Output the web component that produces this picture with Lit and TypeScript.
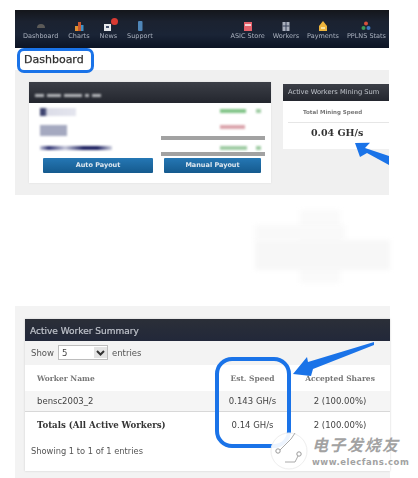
import { LitElement, html, css, svg } from "lit";
import { customElement } from "lit/decorators.js";

const navLeft = [
  { label: "Dashboard", icon: svg`<path d="M1 7a4 4 0 0 1 8 0z" fill="#5b5a58"/>` },
  { label: "Charts", icon: svg`<rect x="1" y="5" width="3" height="5" fill="#e0912f"/><rect x="4" y="1" width="3" height="9" fill="#c9572f"/><rect x="7" y="4" width="2.5" height="6" fill="#3f8fc4"/>` },
  { label: "News", icon: svg`<rect x="1" y="3" width="7" height="7" fill="#e6e8ec"/><rect x="3" y="5" width="3" height="2" fill="#44506a"/>` },
  { label: "Support", icon: svg`<rect x="3" y="0" width="4.5" height="10" rx="1" fill="#4f86b8"/>` },
];
const navRight = [
  { label: "ASIC Store", icon: svg`<rect x="1" y="1" width="8" height="9" fill="#e3606a"/><rect x="2" y="3" width="6" height="2" fill="#f3d4d6"/>` },
  { label: "Workers", icon: svg`<rect x="1.5" y="1" width="7" height="9" fill="#a9afbd"/><path d="M5 1v9M1.5 5h7" stroke="#39425a"/>` },
  { label: "Payments", icon: svg`<path d="M5 0l4 5v5H1V5z" fill="#eeb53c"/><rect x="3" y="6" width="4" height="2" fill="#f7e2a0"/>` },
  { label: "PPLNS Stats", icon: svg`<circle cx="5" cy="2.5" r="2" fill="#d7503c"/><circle cx="2.5" cy="7" r="2" fill="#3c9a58"/><circle cx="7.5" cy="7" r="2" fill="#3c78c0"/>` },
];

const summaryRows = [
  { name: "Worker Name", speed: "Est. Speed", shares: "Accepted Shares", kind: "head" },
  { name: "bensc2003_2", speed: "0.143 GH/s", shares: "2 (100.00%)", kind: "body" },
  { name: "Totals (All Active Workers)", speed: "0.14 GH/s", shares: "2 (100.00%)", kind: "total" },
];

@customElement("app-root")
export class AppRoot extends LitElement {
  static styles = css`
    :host { display: block; width: 418px; height: 478px; background: #fff; overflow: hidden; }
    * { box-sizing: border-box; }
    .page { position: relative; width: 418px; height: 478px; padding: 10px 0 0 15px; font-family: "DejaVu Sans", sans-serif; display: flex; flex-direction: column; }
    .shot1 { width: 374px; height: 185px; display: flex; flex-direction: column; filter: blur(0.5px); }
    nav { height: 38px; flex: none; background: linear-gradient(#14161b 0%, #1b2230 30%, #1a2436 65%, #0c1424 100%); display: flex; justify-content: space-between; padding: 0 0 0 8px; }
    .group { display: flex; gap: 10px; position: relative; }
    .item { display: flex; flex-direction: column; align-items: center; padding-top: 11px; gap: 1px; font-size: 6.5px; line-height: 8px; color: #a9b0bd; white-space: nowrap; }
    .item svg { width: 10px; height: 10px; display: block; }
    .badge { position: absolute; left: 88px; top: 8px; width: 7px; height: 7px; border-radius: 50%; background: #d93a32; }
    .group.right { gap: 8px; padding-right: 3px; }
    .titlebar { height: 22px; flex: none; background: #fff; padding: 3px 0 0 9px; font-size: 11px; line-height: 17px; color: #2e2e2e; -webkit-text-stroke: 0.25px #2e2e2e; }
    .content { flex: 1; background: #f0f0f0; display: flex; align-items: flex-start; padding: 12px 0 0 14px; gap: 12px; }
    .panel-l { width: 242px; height: 101px; background: #fff; flex: none; display: flex; flex-direction: column; box-shadow: 0 0 2px #ddd; }
    .dark { background: linear-gradient(#3c3f47, #23262e); flex: none; }
    .panel-l .dark { height: 21px; display: flex; align-items: flex-end; gap: 3px; padding: 0 0 6px 6px; }
    .smear-l { height: 3px; background: #b4b6ba; filter: blur(.8px); }
    .sm1 { width: 9px; } .sm2 { width: 14px; } .sm3 { width: 18px; } .sm4 { width: 4px; } .sm5 { width: 9px; }
    .info { position: relative; flex: 1; display: flex; justify-content: space-between; padding: 5px 10px 0 11px; }
    .col { display: flex; flex-direction: column; }
    .col.r { width: 41px; padding-top: 1px; }
    .blob { filter: blur(.9px); }
    .b-navy { width: 36px; height: 8px; background: linear-gradient(90deg, #3e4470 14%, #dcdde8 20%, #e4e5ee); }
    .b-grey { width: 27px; height: 11px; margin-top: 9px; background: #a5a9c0; }
    .b-dark { width: 72px; height: 4px; margin-top: 10px; background: linear-gradient(90deg, #c5c7da, #2c3070 12%, #c5c7da 35%, #1c2060 60%, #1c2060 80%, #d0d2e0); }
    .line { display: flex; justify-content: space-between; height: 4px; }
    .line.red { margin-top: 12px; }
    .line.green2 { margin-top: 17px; }
    .seg { height: 4px; }
    .g1 { width: 26px; background: #82c488; } .g2 { width: 5px; background: #9fcca4; }
    .rd { width: 25px; background: #dba5ac; }
    .g3 { width: 27px; background: #9fcca4; }
    .bar { position: absolute; left: 132px; width: 104px; height: 4px; background: #a2a2a2; }
    .bar.a { top: 33px; } .bar.b { top: 49px; }
    .buttons { display: flex; gap: 11px; padding: 0 0 10px 14px; flex: none; }
    button { height: 15px; border: 0; padding: 0; font: bold 6.5px/15px "DejaVu Sans", sans-serif; color: #dfe8f0; background: linear-gradient(#2577b4, #155a8e); border-radius: 1px; }
    .b1 { width: 110px; } .b2 { width: 97px; }
    .panel-r { flex: 1; height: 65px; margin-top: 2px; background: #fff; overflow: hidden; }
    .panel-r .dark { height: 17px; padding-left: 5px; font-size: 6.7px; line-height: 17px; color: #bfc3ca; white-space: nowrap; }
    .lbl { height: 22px; margin: 0 0 0 5px; border-bottom: 1px solid #e6e6e6; padding: 7px 0 0 15px; font-size: 5.5px; line-height: 9px; font-weight: bold; color: #777; }
    .speed { padding: 4px 0 0 28px; font: bold 9.5px/12px "DejaVu Serif", serif; color: #333; }
    .gap { height: 111px; flex: none; }
    .shot2 { width: 375px; height: 172px; background: #f3f3f3; padding: 13px 0 0 10px; filter: blur(0.45px); flex: none; }
    .card { height: 152px; background: #fff; display: flex; flex-direction: column; box-shadow: 0 0 2px #ccc; }
    .card .dark { height: 22px; padding-left: 5px; font-size: 9px; line-height: 25px; color: #c0c4cc; -webkit-text-stroke: 0.2px #c0c4cc; background: linear-gradient(#2b2f38, #22283a); }
    .show { height: 24px; flex: none; background: #f3f3f3; display: flex; align-items: center; gap: 4px; padding: 0 0 1px 6px; font-size: 8.5px; color: #555; }
    .select { width: 50px; height: 15px; border: 1px solid #bdbdbd; background: #fff; display: flex; justify-content: space-between; align-items: center; padding-left: 3px; margin-right: 0; color: #444; }
    .select svg { width: 13px; height: 11px; background: #e4e4e4; }
    .tr { display: grid; grid-template-columns: 190px 75px 1fr; align-items: center; text-align: center; font-size: 8.5px; color: #444; flex: none; }
    .tr > :first-child { text-align: left; padding-left: 12px; }
    .tr.head { height: 26px; font: bold 7.5px "DejaVu Serif", serif; color: #777; }
    .tr.body { height: 21px; background: #f5f5f5; border-bottom: 1px solid #d8d8d8; }
    .tr.total { height: 25px; }
    .tr.total > :first-child { font: bold 8.6px "DejaVu Serif", serif; color: #333; white-space: nowrap; }
    .foot { padding: 9px 0 0 6px; font-size: 8.3px; color: #555; }
    .hl { position: absolute; border: 3px solid #1a73e8; background: transparent; }
    .hl.dash { left: 17px; top: 48px; width: 77px; height: 25px; border-radius: 7px; }
    .hl.speed-box { left: 215px; top: 357px; width: 76px; height: 91px; border-width: 4px; border-radius: 17px; }
    .overlay { position: absolute; left: 0; top: 0; width: 418px; height: 478px; pointer-events: none; }
    .ghost { position: absolute; background: #f7f7f7; filter: blur(2px); }
    .gh1 { left: 255px; top: 240px; width: 135px; height: 30px; }
    .gh2 { left: 255px; top: 225px; width: 90px; height: 15px; background: #f9f9f9; }
    .gh3 { left: 300px; top: 210px; width: 40px; height: 73px; background: #fafafa; }
    .mark { position: absolute; left: 312px; top: 433px; width: 100px; color: #a2a2a2; text-shadow: 0 0 2px #fff, 0 0 2px #fff; }
    .mark-cn { font: bold italic 16px/22px "Noto Sans CJK SC", sans-serif; white-space: nowrap; letter-spacing: 1.5px; }
    .mark-en { font: bold 8.5px/10px "DejaVu Sans", sans-serif; white-space: nowrap; letter-spacing: .5px; margin-top: 2px; }
  `;

  private navItem(it: { label: string; icon: unknown }) {
    return html`<div class="item"><svg viewBox="0 0 10 10">${it.icon}</svg><span>${it.label}</span></div>`;
  }

  render() {
    return html`<div class="page">
      <section class="shot1">
        <nav>
          <div class="group">${navLeft.map((i) => this.navItem(i))}<span class="badge"></span></div>
          <div class="group right">${navRight.map((i) => this.navItem(i))}</div>
        </nav>
        <div class="titlebar">Dashboard</div>
        <div class="content">
          <div class="panel-l">
            <div class="dark">
              <span class="smear-l sm1"></span><span class="smear-l sm2"></span><span class="smear-l sm3"></span><span class="smear-l sm4"></span><span class="smear-l sm5"></span>
            </div>
            <div class="info">
              <div class="col">
                <div class="blob b-navy"></div>
                <div class="blob b-grey"></div>
                <div class="blob b-dark"></div>
              </div>
              <div class="col r">
                <div class="line"><span class="seg blob g1"></span><span class="seg blob g2"></span></div>
                <div class="line red"><span class="seg blob rd"></span></div>
                <div class="line green2"><span class="seg blob g3"></span><span class="seg blob g2"></span></div>
              </div>
              <span class="bar a"></span><span class="bar b"></span>
            </div>
            <div class="buttons"><button class="b1">Auto Payout</button><button class="b2">Manual Payout</button></div>
          </div>
          <div class="panel-r">
            <div class="dark">Active Workers Mining Sum</div>
            <div class="lbl">Total Mining Speed</div>
            <div class="speed">0.04 GH/s</div>
          </div>
        </div>
      </section>
      <div class="gap"></div>
      <section class="shot2">
        <div class="card">
          <div class="dark">Active Worker Summary</div>
          <div class="show">Show
            <div class="select">5<svg viewBox="0 0 13 11"><path d="M3 4l3.5 3.5L10 4" fill="none" stroke="#333" stroke-width="2"/></svg></div>
            entries</div>
          ${summaryRows.map((r) => html`<div class="tr ${r.kind}"><div>${r.name}</div><div>${r.speed}</div><div>${r.shares}</div></div>`)}
          <div class="foot">Showing 1 to 1 of 1 entries</div>
        </div>
      </section>

      <div class="ghost gh3"></div><div class="ghost gh2"></div><div class="ghost gh1"></div>
      <div class="hl dash"></div>
      <div class="hl speed-box"></div>
      <svg class="overlay" viewBox="0 0 418 478">
        <path d="M355 143L370 142.7 365 148 389 156V165L367 153 360 157z" fill="#1a73e8"/>
        <path d="M293 374L307 357 308 362 374 342V345L313 369 311 376z" fill="#1a73e8"/>
        <circle cx="289" cy="451" r="18" fill="#fff" fill-opacity=".92" stroke="#eee"/>
        <path d="M279 451l12-12M285 462h10l4-8M295 433l-4 6" fill="none" stroke="#aaa" stroke-width="1"/>
        <circle cx="278" cy="451" r="2.2" fill="#fff" stroke="#999"/>
        <circle cx="299" cy="454" r="2.2" fill="#fff" stroke="#999"/>
      </svg>
      <div class="mark"><div class="mark-cn">电子发烧友</div><div class="mark-en">www.elecfans.com</div></div>
    </div>`;
  }
}
